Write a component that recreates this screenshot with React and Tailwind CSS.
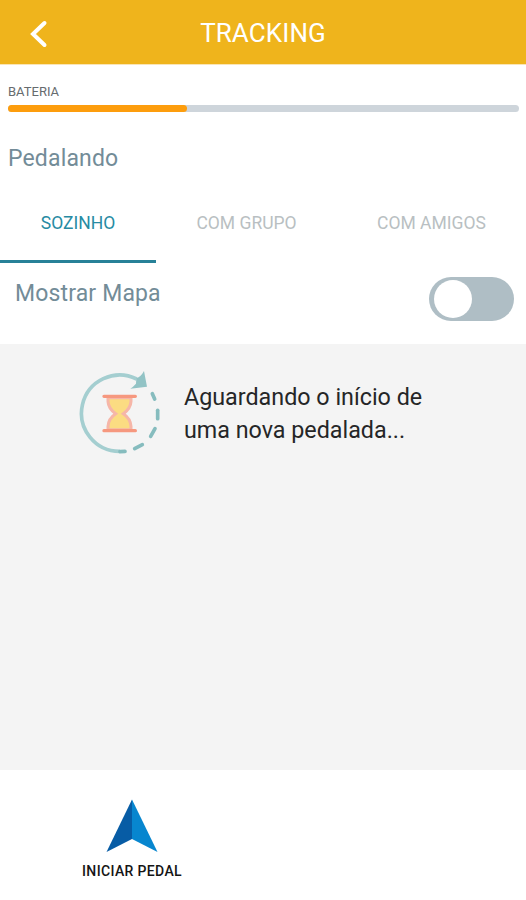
import { useState } from 'react';

const tabs = [
    { id: 'sozinho', label: 'SOZINHO', className: 'w-[156px]' },
    { id: 'grupo', label: 'COM GRUPO', className: 'w-[181px]' },
    { id: 'amigos', label: 'COM AMIGOS', className: 'w-[189px]' },
];

function WaitingIcon() {
    return (
        <svg className="h-[84px] w-[84px] shrink-0" viewBox="24 33 252 252" fill="none">
            <path d="M200 57A114.5 114.5 0 1 0 150 274" stroke="#a4ced0" strokeWidth="11" />
            <path d="M222 33L231 80L181 86Q189 81 198 71L199 55Q213 50 222 33Z" fill="#92c3c5" />
            <g stroke="#86bcbe" strokeWidth="11" strokeLinecap="round">
                <path d="M247 101L254 117" />
                <path d="M263 151V176" />
                <path d="M255 206L242 229" />
                <path d="M217 254L194 266" />
                <path d="M165 274L150 275" />
            </g>
            <path d="M114 113V124Q115 145 137 161Q115 176 114 199V209H183V199Q182 176 160 161Q182 145 183 124V113Z" fill="#fbdc82" stroke="#f6b6a8" strokeWidth="9" />
            <path d="M102 109H196M102 212H196" stroke="#f6987f" strokeWidth="10" strokeLinecap="round" />
        </svg>
    );
}

export default function App() {
    const [activeTab, setActiveTab] = useState('sozinho');
    const [showMap, setShowMap] = useState(false);
    const battery = 35;

    return (
        <div className="flex h-[900px] w-[526px] flex-col overflow-hidden bg-white font-['Roboto',sans-serif]">
            <header className="grid h-[65px] shrink-0 grid-cols-[78px_1fr_78px] items-center border-b border-[#fae5b5] bg-[#efb41c] bg-clip-padding text-white">
                <button className="pt-1 pl-[29px]">
                    <svg className="h-7 w-[19px]" viewBox="0 0 19 28" fill="none" stroke="currentColor" strokeWidth="4" strokeLinecap="round">
                        <path d="M15.5 3L4 14L15.5 25" />
                    </svg>
                </button>
                <h1 className="pt-px text-center text-[26px] leading-8 tracking-[0.1px]">TRACKING</h1>
            </header>

            <section className="h-[65px] px-2 pt-[19px]">
                <p className="text-[13px] leading-4 text-[#666b6e]">BATERIA</p>
                <div className="mt-[5px] -mr-px h-[7px] rounded-full bg-[#ced5db]">
                    <div className="h-full rounded-full bg-[#fd9d0d]" style={{ width: `${battery}%` }} />
                </div>
            </section>

            <h2 className="h-[55px] px-2 pt-[13px] text-[23px] leading-8 tracking-[0.15px] text-[#738c98]">Pedalando</h2>

            <nav className="flex h-[78px] shrink-0">
                {tabs.map((tab) => (
                    <button
                        key={tab.id}
                        onClick={() => setActiveTab(tab.id)}
                        className={`${tab.className} border-b-[3px] pt-px text-[17.5px] ${activeTab === tab.id ? 'border-[#278198] text-[#278ba3]' : 'border-transparent text-[#b9bfc2]'}`}
                    >
                        {tab.label}
                    </button>
                ))}
            </nav>

            <section className="flex h-[81px] shrink-0 justify-between pr-3 pl-[15px]">
                <span className="pt-[15px] text-[23px] leading-8 tracking-[0.15px] text-[#738c98]">Mostrar Mapa</span>
                <button
                    role="switch"
                    aria-checked={showMap}
                    onClick={() => setShowMap(!showMap)}
                    className={`mt-[14px] flex h-11 w-[85px] items-center rounded-full px-[5px] ${showMap ? 'justify-end bg-[#278198]' : 'bg-[#afbec5]'}`}
                >
                    <span className="h-[38px] w-[38px] rounded-full bg-white" />
                </button>
            </section>

            <main className="flex h-[426px] shrink-0 items-start bg-[#f4f4f4] pt-[27px] pl-[78px]">
                <WaitingIcon />
                <p className="pt-[10px] pl-[22px] text-[23.3px] leading-[33px] text-[#252627]">
                    Aguardando o início de
                    <br />
                    uma nova pedalada...
                </p>
            </main>

            <footer className="pt-[29px] pl-[82px]">
                <button className="flex w-[100px] flex-col items-center">
                    <svg className="h-[54px] w-[52px]" viewBox="0 0 52 54">
                        <path d="M26 0.5L0.5 53L26 40Z" fill="#075ca5" />
                        <path d="M26 0.5L51.5 53L26 40Z" fill="#0786cf" />
                    </svg>
                    <span className="mt-[8px] text-[14px] leading-5 font-medium tracking-[0.35px] whitespace-nowrap text-[#151515]">INICIAR PEDAL</span>
                </button>
            </footer>
        </div>
    );
}
